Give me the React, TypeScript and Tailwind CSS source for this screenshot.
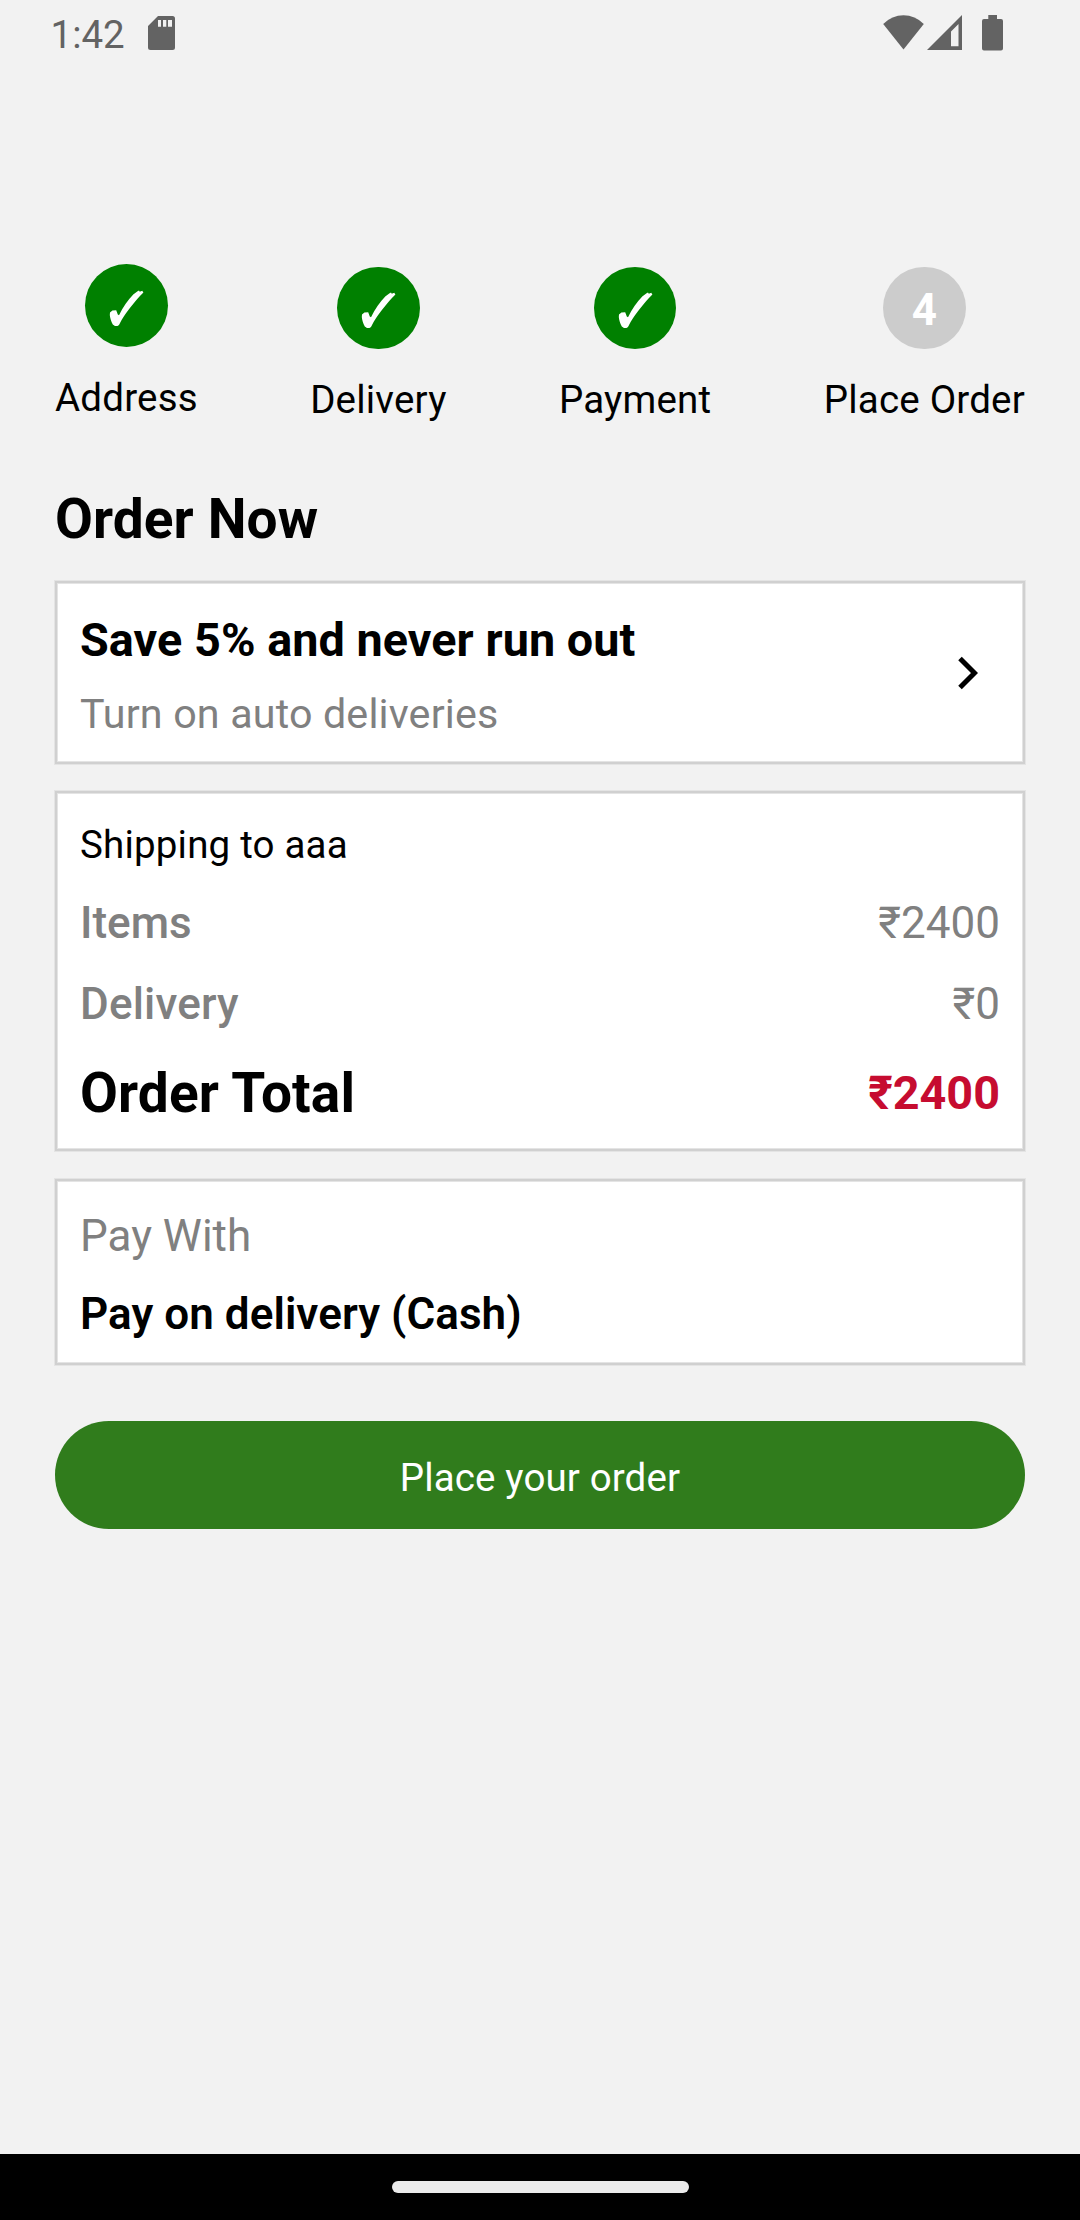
import React from "react";

const STATUS = "#636363";

function StatusBar() {
  return (
    <header className="flex h-[66px] shrink-0 items-start pl-[50.5px] pr-[77px] text-[#636363]">
      <span className="mt-[12px] text-[38.5px] leading-[45px]">1:42</span>
      <svg className="ml-[23.5px] mt-[16px]" width="27" height="34" viewBox="0 0 27 34" fill={STATUS}>
        <path
          fillRule="evenodd"
          d="M10 0H24.5Q27 0 27 2.5V31.5Q27 34 24.5 34H2.5Q0 34 0 31.5V10ZM10 4V10.7H13V4ZM15 4V10.7H18.3V4ZM20 4V10.7H24V4Z"
        />
      </svg>
      <div className="ml-auto flex items-start">
        <svg className="mt-[15px]" width="42" height="35" viewBox="0 0 42 35" fill={STATUS}>
          <path d="M0.200 9Q9 0.300 20.500 0.300T40.800 9L20.500 34.500Z" />
        </svg>
        <svg className="ml-[2px] mt-[15px]" width="35" height="35" viewBox="0 0 35 35" fill={STATUS}>
          <path fillRule="evenodd" d="M35 0V35H0ZM31.5 9L24 16.5V31.3H31.5Z" />
        </svg>
        <svg className="ml-[20px] mt-[15px]" width="21" height="36" viewBox="0 0 21 36" fill={STATUS}>
          <path d="M6.3 0H15V4H19Q21 4 21 6V33.5Q21 35.6 19 35.6H2Q0 35.6 0 33.5V6Q0 4 2 4H6.3Z" />
        </svg>
      </div>
    </header>
  );
}

function Check() {
  return (
    <svg width="36" height="38" viewBox="0 0 36 38" fill="#fff">
      <path d="M1 23.6L3.4 21.6L7.2 21.2L8.8 25.4L10 26.2C14 18 19 11 24.5 5.2C26.5 3.5 28 2.6 30 1.4L30.8 2.8L33.2 1.8L34.4 3.6L30.5 7.6C24 15 17 24 12.6 31L10 36L8.5 37L6 37L3.8 35.4C2.2 32.5 1 29 .8 26Z" />
    </svg>
  );
}

type StepProps = { label: string; done?: boolean; number: number; first?: boolean };

function Step({ label, done, number, first }: StepProps) {
  return (
    <div className={first ? "flex flex-col items-center" : "flex flex-col items-center pt-[2.5px]"}>
      <div
        className={
          done
            ? "flex h-[82.5px] w-[82.5px] items-center justify-center rounded-full bg-[#008000] pl-[1.5px] pt-[5px]"
            : "flex h-[82.5px] w-[82.5px] items-center justify-center rounded-full bg-[#cccccc] pt-[4px]"
        }
      >
        {done ? <Check /> : <span className="text-[44px] font-bold leading-[52px] text-white">{number}</span>}
      </div>
      <span className="mt-[28px] text-[38.5px] leading-[45px] tracking-[0.2px]">{label}</span>
    </div>
  );
}

const CARD =
  "border-2 border-[#d0d0d0] bg-white px-[23px] shadow-[0_0_0_1px_#e4e4e4,inset_0_0_0_1px_#e4e4e4]";

export default function App() {
  return (
    <div className="flex h-[2220px] w-[1080px] flex-col bg-[#f2f2f2] font-['Roboto',sans-serif] text-black">
      <StatusBar />
      <main className="flex flex-1 flex-col px-[55px] pt-[198px]">
        <section className="flex items-start justify-between">
          <Step label="Address" number={1} done first />
          <Step label="Delivery" number={2} done />
          <Step label="Payment" number={3} done />
          <Step label="Place Order" number={4} />
        </section>

        <h1 className="mt-[65px] text-[55px] font-bold leading-[64px] tracking-[0.1px]">Order Now</h1>

        <section className={`${CARD} mt-[30px] flex h-[183px] items-center justify-between`}>
          <div className="flex flex-col self-start pt-[30px]">
            <span className="text-[46.75px] font-bold leading-[55px] tracking-[0.06px]">Save 5% and never run out</span>
            <span className="mt-[20px] text-[41.25px] leading-[52px] tracking-[0.15px] text-[#808080]">
              Turn on auto deliveries
            </span>
          </div>
          <svg className="mr-[22px]" width="20" height="34" viewBox="0 0 20 34" fill="none" stroke="#000" strokeWidth="5">
            <path d="M2 2.5L16.5 17L2 31.5" />
          </svg>
        </section>

        <section className={`${CARD} mt-[27px] flex h-[360px] flex-col pt-[29px]`}>
          <span className="text-[38.5px] leading-[45px] tracking-[0.19px]">Shipping to aaa</span>
          <div className="mt-[30px] flex justify-between text-[44px] leading-[52px] text-[#808080]">
            <span className="font-medium">Items</span>
            <span>₹2400</span>
          </div>
          <div className="mt-[29px] flex justify-between text-[44px] leading-[52px] text-[#808080]">
            <span className="font-medium tracking-[0.18px]">Delivery</span>
            <span>₹0</span>
          </div>
          <div className="mt-[31px] flex items-start justify-between font-bold">
            <span className="text-[55px] leading-[64px] tracking-[0.13px]">Order Total</span>
            <span className="mt-[5px] text-[46.75px] leading-[55px] text-[#c60c30]">₹2400</span>
          </div>
        </section>

        <section className={`${CARD} mt-[28px] flex h-[186px] flex-col pt-[29px]`}>
          <span className="text-[44px] leading-[52px] text-[#808080]">Pay With</span>
          <span className="mt-[26px] text-[44px] font-semibold leading-[52px] tracking-[0.05px]">
            Pay on delivery (Cash)
          </span>
        </section>

        <button className="mt-[56px] flex h-[108px] items-start justify-center rounded-full bg-[#307c1c] pt-[34px] text-[38.5px] leading-[45px] tracking-[0.13px] text-white">
          Place your order
        </button>
      </main>
      <footer className="flex h-[66px] shrink-0 justify-center bg-black pt-[27px]">
        <div className="h-[12px] w-[297px] rounded-full bg-[#ebebeb]" />
      </footer>
    </div>
  );
}
